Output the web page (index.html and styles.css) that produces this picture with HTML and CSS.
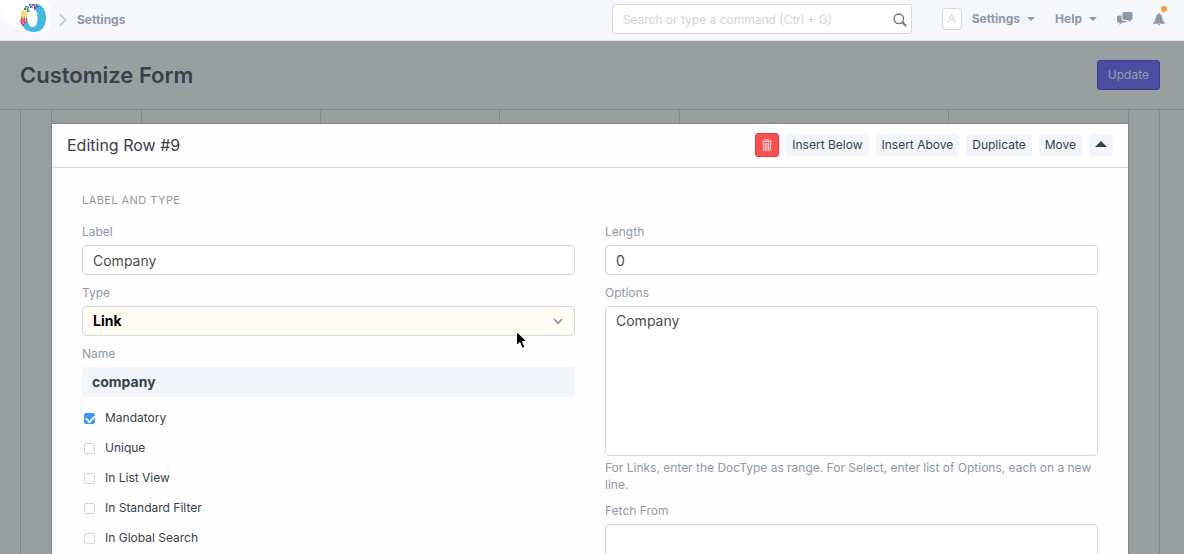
FILE: index.html
```html
<!DOCTYPE html>
<html lang="en">
<head>
<meta charset="utf-8">
<title>Customize Form</title>
<link rel="stylesheet" href="styles.css">
</head>
<body>
<header class="navbar">
  <a class="brand" href="#" aria-label="Home">
    <svg width="54" height="40" viewBox="0 0 54 40">
      <path d="M0 0H48C52 5 52 14 50 23C49 31 43 34 36 34C28 34 23 28 16 27C6 26 0 18 0 8Z" fill="#fff"/>
      <path d="M37 4C42.500 5 46 10.500 46 18C46 26.500 41.500 32 34 32C28 32 24 29.500 22.500 25L27.500 19.500C28 24.500 30 27 32.800 27C36.300 27 37.500 23 37.500 18C37.500 12.500 36.500 10 34 9Z" fill="#45b8e2"/>
      <g stroke-width="1.800" stroke-dasharray="1.800 0.700">
        <path d="M29 4.800h4M30 7h3" stroke="#2f6fc0"/>
        <path d="M33 4.800h5M34 6.800h4M34 8.600h2" stroke="#9434b0"/>
        <path d="M25 6.800h4M24 9h5M27 11h3" stroke="#2f8f74"/>
        <path d="M22 11.500h5M22 13.500h6M21 15.500h6" stroke="#e8d257"/>
        <path d="M21 17.200h6" stroke="#ef9d4a"/>
        <path d="M21 19h6M20.500 21h6M21 23h5M22 25h2" stroke="#e5363d"/>
      </g>
    </svg>
  </a>
  <svg class="crumb-arrow" width="10" height="14" viewBox="0 0 10 14"><path d="M1.500 1L7.500 7L1.500 13" fill="none" stroke="#c3ccd4" stroke-width="1.800"/></svg>
  <a class="nav-link" href="#">Settings</a>
  <div class="nav-right">
    <div class="search">
      <input type="text" aria-label="Search" placeholder="Search or type a command (Ctrl + G)">
      <svg class="search-icon" width="14" height="14" viewBox="0 0 14 14" fill="none" stroke="#6c7680"><circle cx="5.800" cy="5.800" r="4.800" stroke-width="1.300"/><path d="M9.300 9.300L13 13" stroke-width="2"/></svg>
    </div>
    <span class="avatar">A</span>
    <button class="nav-link menu-settings" type="button">Settings <span class="caret"></span></button>
    <button class="nav-link menu-help" type="button">Help <span class="caret"></span></button>
    <button class="icon-btn chat" type="button" aria-label="Chat">
      <svg width="16" height="14" viewBox="0 0 16 14" fill="#8d99a6"><path d="M7 0H14Q15.500 0 15.500 1.500V6.500Q15.500 8 14 8H13.500V10.500L11 8H7Q5.500 8 5.500 6.500V1.500Q5.500 0 7 0Z"/><path d="M1.500 3.500H4.500V7Q4.500 9 6.500 9H9.500Q9.500 10.500 8 10.500H5L2.500 13V10.500H1.500Q0 10.500 0 9V5Q0 3.500 1.500 3.500Z"/></svg>
    </button>
    <button class="icon-btn bell" type="button" aria-label="Notifications">
      <svg width="12" height="13" viewBox="0 0 12 13" fill="#8d99a6"><path d="M6 0Q6.800 0 6.800 1Q9 1.700 9.300 4.500Q9.500 8 11.700 9.500V10.700H.3V9.500Q2.500 8 2.700 4.500Q3 1.700 5.200 1Q5.200 0 6 0ZM4.500 11.200H7.500Q7.200 12.400 6 12.400Q4.800 12.400 4.500 11.200Z"/></svg>
      <span class="badge"></span>
    </button>
  </div>
</header>

<div class="page-head">
  <h1>Customize Form</h1>
  <button class="btn-primary" type="button">Update</button>
</div>

<main class="page">
  <div class="grid">
    <div class="grid-row"><i></i><i></i><i></i><i></i><i></i><i></i></div>
    <form class="row-form">
      <div class="form-head">
        <h2>Editing Row #9</h2>
        <div class="actions">
          <button class="btn danger" type="button" aria-label="Delete">
            <svg width="12" height="14" viewBox="0 0 12 14" fill="none" stroke="#fff"><path d="M.5 2.500H11.500M4 2.500V.8H8V2.500M1.500 3L2 13.300H10L10.500 3M4 4.500V12M6 4.500V12M8 4.500V12"/></svg>
          </button>
          <button class="btn" type="button">Insert Below</button>
          <button class="btn" type="button">Insert Above</button>
          <button class="btn" type="button">Duplicate</button>
          <button class="btn" type="button">Move</button>
          <button class="btn collapse" type="button" aria-label="Collapse"><span class="caret up"></span></button>
        </div>
      </div>
      <div class="form-body">
        <h3>Label and Type</h3>
        <div class="columns">
          <div class="column">
            <div class="field"><label for="f-label">Label</label><input class="control" id="f-label" type="text" value="Company"></div>
            <div class="field"><label for="f-type">Type</label>
              <div class="select-wrap">
                <select class="control required" id="f-type"><option>Link</option></select>
                <svg class="chevron" width="10" height="7" viewBox="0 0 10 7"><path d="M1 1L5 5.200L9 1" fill="none" stroke="#8d99a6" stroke-width="1.800"/></svg>
              </div>
            </div>
            <div class="field"><label for="f-name">Name</label><output class="static" id="f-name">company</output></div>
            <div class="checks">
              <label class="check"><input type="checkbox" checked>Mandatory</label>
              <label class="check"><input type="checkbox">Unique</label>
              <label class="check"><input type="checkbox">In List View</label>
              <label class="check"><input type="checkbox">In Standard Filter</label>
              <label class="check"><input type="checkbox">In Global Search</label>
            </div>
          </div>
          <div class="column">
            <div class="field"><label for="f-length">Length</label><input class="control" id="f-length" type="text" value="0"></div>
            <div class="field"><label for="f-options">Options</label><textarea class="control options" id="f-options">Company</textarea>
              <p class="help">For Links, enter the DocType as range. For Select, enter list of Options, each on a new line.</p></div>
            <div class="field"><label for="f-fetch">Fetch From</label><textarea class="control fetch" id="f-fetch"></textarea></div>
          </div>
        </div>
      </div>
    </form>
  </div>
</main>
<svg class="cursor" width="14" height="20" viewBox="0 0 14 20"><path d="M1.500 1.500V15.500L4.800 12.500L7.200 18.300L9.900 17.100L7.500 11.500H12Z" fill="#000" stroke="#fff" stroke-width="1"/></svg>
</body>
</html>
```
FILE: styles.css
```css
* { box-sizing: border-box; }
html, body { height: 100%; }
body {
  margin: 0;
  overflow: hidden;
  background: #98a09f;
  color: #36414c;
  font-family: Inter, "Noto Sans", sans-serif;
  font-size: 12px;
  line-height: 18px;
}
h1, h2, h3, p { margin: 0; }
button, input, select, textarea { font: inherit; color: inherit; }
button { border: 0; padding: 0; background: none; }
svg { display: block; }

.navbar {
  display: flex;
  align-items: center;
  height: 41px;
  background: #f5f7fa;
  border-bottom: 1px solid #e3e8ec;
}
.crumb-arrow { margin: 0 9px 0 4px; }
.nav-link {
  color: #8d99a6;
  font-weight: 700;
  text-decoration: none;
  display: flex;
  align-items: center;
  gap: 7px;
}
.nav-right { display: flex; align-items: center; margin-left: auto; padding: 0 19px 2px 0; }
.search { position: relative; width: 300px; }
.search input {
  display: block;
  width: 100%;
  height: 30px;
  padding: 0 30px 0 10px;
  border: 1px solid #d1d8dd;
  border-radius: 3px;
  background: #fff;
}
.search input::placeholder { color: #cdd5da; }
.search-icon { position: absolute; right: 5px; top: 9px; }
.avatar {
  width: 20px;
  height: 22px;
  margin: 0 10px 0 30px;
  border: 1px solid #d1d8dd;
  border-radius: 4px;
  background: #fff;
  color: #d1d8dd;
  line-height: 20px;
  text-align: center;
}
.menu-help { margin-left: 20px; }
.caret { border: 4px solid transparent; border-top-color: #8d99a6; border-bottom: 0; }
.caret.up { border: 6px solid transparent; border-bottom-color: #36414c; border-top: 0; }
.chat { margin-left: 20px; }
.bell { position: relative; margin-left: 20px; }
.badge { position: absolute; top: -7px; right: -2px; width: 6px; height: 6px; border-radius: 50%; background: #f89c36; }

.page-head {
  display: flex;
  align-items: center;
  justify-content: space-between;
  height: 69px;
  padding: 0 24px 0 20px;
  border-bottom: 1px solid #81898d;
}
h1 { font-size: 22px; line-height: 32px; font-weight: 600; }
.btn-primary {
  height: 30px;
  padding: 0 10px;
  border: 1px solid #3d3b99;
  border-radius: 3px;
  background: #4b4da0;
  color: #999fb0;
}

.page {
  margin: 0 24px 0 20px;
  padding: 0 30px;
  border: solid #81898d;
  border-width: 0 1px;
}
.grid { border: solid #81898d; border-width: 0 1px; }
.grid-row {
  display: grid;
  grid-template-columns: 1fr 2fr 2fr 2fr 3fr 2fr;
  height: 14px;
  border-bottom: 1px solid #81898d;
}
.grid-row i:not(:last-child) { border-right: 1px solid #81898d; }

.row-form { background: #fefefe; padding-bottom: 30px; }
.form-head {
  display: flex;
  align-items: center;
  justify-content: space-between;
  height: 44px;
  padding: 0 15px 2px;
  border-bottom: 1px solid #d1d8dd;
}
h2 { font-size: 16px; line-height: 24px; font-weight: 400; }
.actions { display: flex; gap: 7px; align-items: center; }
.btn {
  display: flex;
  align-items: center;
  justify-content: center;
  height: 22px;
  padding: 0 6px;
  border-radius: 3px;
  background: #f2f5fa;
}
.btn.danger { width: 24px; height: 24px; border: 1px solid #ee3939; background: #f45353; }
.btn.collapse { width: 24px; padding-bottom: 2px; }

.form-body { padding: 23px 30px; }
h3 {
  margin-bottom: 14px;
  color: #8d99a6;
  font-size: 11px;
  line-height: 18px;
  font-weight: 400;
  letter-spacing: 0.04em;
  text-transform: uppercase;
}
.columns { display: grid; grid-template-columns: 1fr 1fr; gap: 30px; }
.field { display: flex; flex-direction: column; margin-bottom: 9px; }
.field > label { margin-bottom: 4px; color: #8d99a6; }
.control {
  display: block;
  width: 100%;
  height: 30px;
  padding: 0 10px;
  border: 1px solid #d1d8dd;
  border-radius: 4px;
  background: #fff;
  color: #4c4c4c;
  font-size: 14px;
  resize: none;
}
.select-wrap { position: relative; }
select.control { appearance: none; }
.control.required { background: #fffcf2; color: #000; font-weight: 700; }
.chevron { position: absolute; right: 12px; top: 12px; }
.static {
  height: 30px;
  padding: 6px 10px;
  border-radius: 4px;
  background: #f2f5fa;
  font-size: 14px;
  font-weight: 700;
}
.options { height: 150px; padding: 5px 10px; }
.fetch { height: 150px; }
.help { margin-top: 3px; color: #8d99a6; line-height: 17px; }
.checks { display: flex; flex-direction: column; gap: 12px; padding-top: 3px; }
.check { display: flex; align-items: center; gap: 10px; padding-left: 2px; }
.check input {
  appearance: none;
  width: 11px;
  height: 11px;
  margin: 0;
  border: 1px solid #cdd5da;
  border-radius: 2px;
  background: #fff;
}
.check input:checked {
  border-color: #3b99fc;
  background: #3b99fc;
  position: relative;
}
.check input:checked::after {
  content: "";
  position: absolute;
  left: 1px;
  top: 1px;
  width: 7px;
  height: 4px;
  border: solid #fff;
  border-width: 0 0 2px 2px;
  transform: rotate(-45deg);
}
.cursor { position: absolute; left: 515px; top: 330px; }
```
